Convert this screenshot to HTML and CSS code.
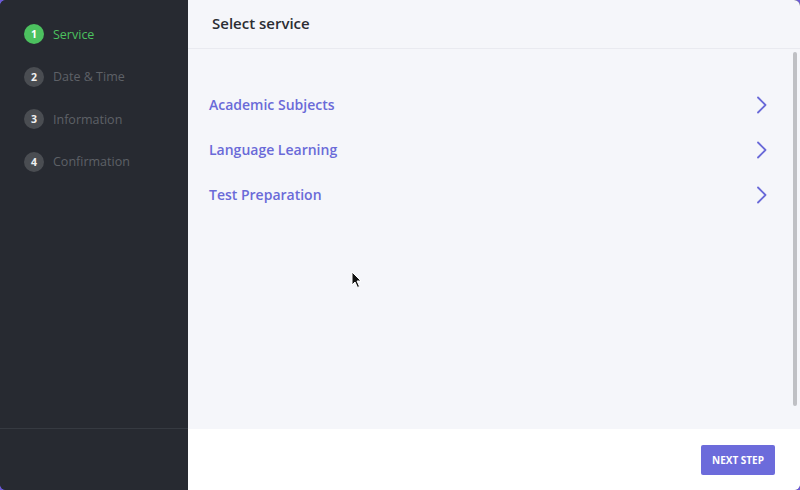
FILE: index.html
```html
<!DOCTYPE html>
<html>
<head>
<meta charset="utf-8">
<link rel="stylesheet" href="styles.css">
</head>
<body>
<div class="app">
  <aside class="sidebar">
    <ul class="steps">
      <li class="step active"><span class="num">1</span><span class="label">Service</span></li>
      <li class="step"><span class="num">2</span><span class="label">Date &amp; Time</span></li>
      <li class="step"><span class="num">3</span><span class="label">Information</span></li>
      <li class="step"><span class="num">4</span><span class="label">Confirmation</span></li>
    </ul>
    <div class="side-footer"></div>
  </aside>
  <main class="main">
    <header class="head">Select service</header>
    <div class="body">
      <ul class="services">
        <li class="service"><span>Academic Subjects</span><svg class="chev" width="12" height="18" viewBox="0 0 12 18"><path d="M2 1.5 L9.5 9 L2 16.5" fill="none" stroke="#6a6ad8" stroke-width="1.8" stroke-linecap="round" stroke-linejoin="round"/></svg></li>
        <li class="service"><span>Language Learning</span><svg class="chev" width="12" height="18" viewBox="0 0 12 18"><path d="M2 1.5 L9.5 9 L2 16.5" fill="none" stroke="#6a6ad8" stroke-width="1.8" stroke-linecap="round" stroke-linejoin="round"/></svg></li>
        <li class="service"><span>Test Preparation</span><svg class="chev" width="12" height="18" viewBox="0 0 12 18"><path d="M2 1.5 L9.5 9 L2 16.5" fill="none" stroke="#6a6ad8" stroke-width="1.8" stroke-linecap="round" stroke-linejoin="round"/></svg></li>
      </ul>
      <div class="scrollbar"></div>
      <svg class="cursor" width="12" height="18" viewBox="0 0 12 18"><path d="M1 1 L1 14 L4 11 L6.5 16.5 L8.5 15.5 L6 10 L10 10 Z" fill="#111" stroke="#fff" stroke-width="1"/></svg>
    </div>
    <footer class="foot"><button class="next">NEXT STEP</button></footer>
  </main>
</div>
</body>
</html>
```
FILE: styles.css
```css
* { box-sizing: border-box; }
html, body { margin: 0; padding: 0; }
body {
  width: 800px; height: 490px; overflow: hidden;
  background: #6b5ad6;
  font-family: "Open Sans", "Liberation Sans", sans-serif;
}
.app {
  display: flex; width: 800px; height: 490px;
  border-radius: 6px; overflow: hidden;
  background: #272a31;
}
.sidebar {
  width: 188px; flex: none;
  background: #272a31;
  display: flex; flex-direction: column;
  justify-content: space-between;
}
.steps {
  list-style: none; margin: 0; padding: 24px 0 0 24px;
  display: flex; flex-direction: column; gap: 22.5px;
}
.step { display: flex; align-items: center; gap: 9px; height: 20px; }
.num {
  width: 20px; height: 20px; border-radius: 50%;
  background: #4a4d52; color: #f1f1f1;
  font-size: 10.5px; font-weight: 700;
  display: flex; align-items: center; justify-content: center;
}
.label { font-size: 12.5px; color: #5e6167; }
.step.active .num { background: #4cc15f; color: #fff; }
.step.active .label { color: #4cc15f; }
.side-footer { height: 62px; border-top: 1px solid #363a41; }

.main {
  flex: 1; display: flex; flex-direction: column;
  background: #f5f6fa;
}
.head {
  height: 49px; flex: none;
  padding: 13px 0 0 24px;
  font-size: 15px; font-weight: 600; color: #2b2d33;
  border-bottom: 1px solid #e9eaf0;
}
.body { flex: 1; position: relative; }
.services {
  list-style: none; margin: 0; padding: 33px 30px 0 21px;
  display: flex; flex-direction: column;
}
.service {
  height: 45px; display: flex; align-items: center; justify-content: space-between;
  font-size: 14px; font-weight: 600; color: #6a6ad8;
}
.chev { margin-right: 2px; }
.scrollbar {
  position: absolute; right: 3px; top: 3px; width: 4px; height: 354px;
  background: #bfc0c4; border-radius: 2px;
}
.cursor { position: absolute; left: 163px; top: 222px; }
.foot {
  height: 61px; flex: none; background: #fff;
  display: flex; align-items: center; justify-content: flex-end;
  padding: 0 25px 0 0;
}
.next {
  width: 74px; height: 30px; border: none; border-radius: 2px;
  background: #6c6bdb; color: #fff;
  font-family: "Open Sans", sans-serif; font-size: 10px; font-weight: 700;
}
```
